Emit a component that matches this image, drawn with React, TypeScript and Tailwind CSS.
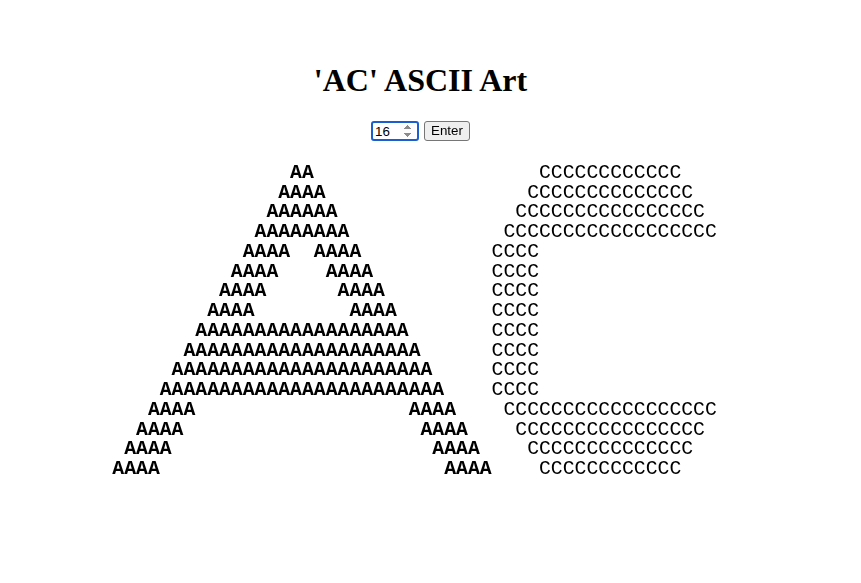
import React, { useState } from "react";

const buildA = (n: number) => {
  const rows: string[] = [];
  const q = n / 4;
  for (let i = 0; i < n; i++) {
    const w = 2 * (i + 1);
    const pad = " ".repeat(n - 1 - i);
    const band = Math.floor(i / q);
    const body =
      band % 2 === 0 ? "A".repeat(w) : "AAAA" + " ".repeat(w - 8) + "AAAA";
    rows.push(pad + body + pad);
  }
  return rows;
};

const buildC = (n: number) => {
  const rows: string[] = [];
  const q = n / 4;
  const full = 20;
  for (let i = 0; i < n; i++) {
    let s: string;
    if (i < q) s = " ".repeat(q - i) + "C".repeat(12 + 2 * i);
    else if (i >= n - q) s = " ".repeat(i - (n - q) + 1) + "C".repeat(12 + 2 * (n - 1 - i));
    else s = "CCCC";
    rows.push(s + " ".repeat(Math.max(0, full - s.length)));
  }
  return rows;
};

const App = () => {
  const [size, setSize] = useState("16");
  const n = 16;
  const aRows = buildA(n);
  const cRows = buildC(n);

  return (
    <div className="mr-5 flex flex-col items-center pt-[62px] bg-white text-black">
      <h1 className="text-[32px] leading-[36px] font-bold font-['Liberation_Serif',serif]">
        'AC' ASCII Art
      </h1>
      <div className="mt-[23px] flex items-center gap-[5px] font-['Liberation_Sans',Arial,sans-serif] text-[13.33px]">
        <input
          type="number"
          autoFocus
          value={size}
          onChange={(e) => setSize(e.target.value)}
          className="w-[48px] h-[20px] px-[2px] border-2 border-[#1a5ecf] rounded-[3px] outline-none text-[13.33px] leading-none"
        />
        <button className="w-[46px] h-[20px] bg-[#efefef] border border-[#767676] rounded-[3px] text-[13.33px] leading-none">
          Enter
        </button>
      </div>
      <pre className="mt-[23px] font-['Liberation_Mono','Courier_New',monospace] text-[19.75px] leading-[19.73px] font-bold">
        {aRows.map((a, i) => (
          <div key={i}>
            <span>{a}</span>
            <span className="font-normal">{cRows[i]}</span>
          </div>
        ))}
      </pre>
    </div>
  );
};

export default App;
